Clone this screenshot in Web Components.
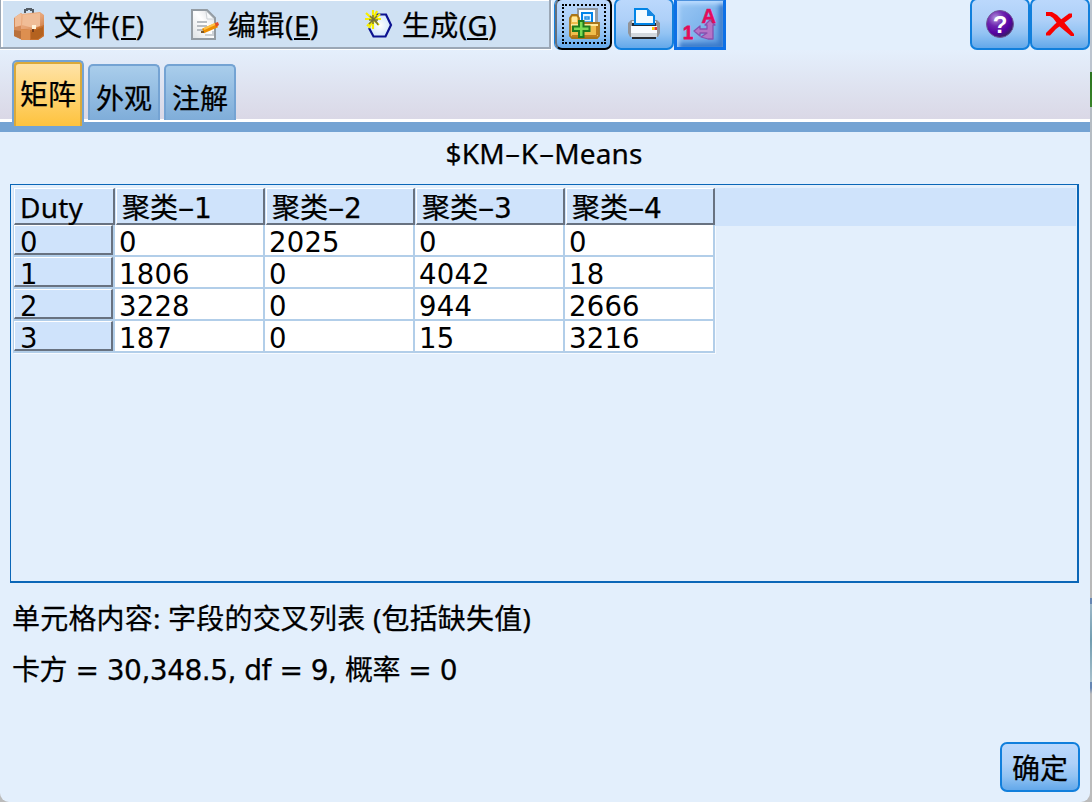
<!DOCTYPE html>
<html lang="zh-CN">
<head>
<meta charset="utf-8">
<title>$KM-K-Means</title>
<style>
html,body{margin:0;height:100%;overflow:hidden;background:#b9bfc6}
body{font:28px/32px "Noto Sans","Noto Sans CJK SC",sans-serif;color:#000;-webkit-text-stroke:.25px #000}
</style>
</head>
<body>
<matrix-window></matrix-window>
<script>
const define = (name, css, html, ready) => customElements.define(name, class extends HTMLElement {
  constructor() {
    super();
    this.attachShadow({mode: 'open'}).innerHTML = `<style>${css}</style>${html}`;
  }
  connectedCallback() { if (ready) ready.call(this, this.shadowRoot); }
});

// Wide hyphen as in the interface face.
define('wide-dash', ':host{display:inline-block;width:16px;text-align:center;letter-spacing:0}span{display:inline-block;transform:scale(1.8,.9)}', '<span><slot></slot></span>');

// Text run tracked so that it fills a given measure.
define('ui-text', ':host{display:inline-block;white-space:pre;flex:none}span{display:inline-block}', '<span><slot></slot></span>', function (root) {
  const w = +this.getAttribute('w');
  if (!w) return;
  const dashes = this.querySelectorAll('wide-dash');
  dashes.forEach(d => customElements.upgrade(d));
  const span = root.querySelector('span');
  const n = [...this.textContent].length - dashes.length;
  span.style.letterSpacing = ((w - span.getBoundingClientRect().width) / n) + 'px';
  this.style.width = w + 'px';
});

define('menu-item',
  ':host{display:flex;align-items:center;gap:8px;height:44px}::slotted(svg){display:block;flex:none}',
  '<slot name="icon"></slot><slot></slot>');

define('menu-bar', `
:host{display:flex;box-sizing:border-box;width:551px;height:49px;padding:3px 0 0 11px;background:#cfe1f3;
 border:solid #9ba7b5;border-width:0 2px 2px 1px;box-shadow:inset 2px 1px #fff,1px 1px #fff,0 2px #fff}
`, '<slot></slot>');

define('tool-button', `
:host{display:block;position:relative;box-sizing:border-box;flex:none;width:60px;height:52px;margin-top:-2px}
.b{box-sizing:border-box;width:100%;height:100%;display:flex;align-items:center;justify-content:center;border:2px solid #117fdc;border-radius:7px;
 background:linear-gradient(#bbd8fc,#aed0f8 42%,#92c3f3 70%,#63a8ea)}
:host([kind=focus]) .b{border-color:#000;border-left-color:#65707c;box-shadow:-1px 0 #1482df}
:host([kind=focus]) .b::after{content:"";position:absolute;left:7px;right:6px;top:6px;bottom:6px;border:2px dotted #000}
:host([kind=flat]) .b{border:3px solid #0d70e6;border-top-color:#4d91dc;border-radius:0;background:linear-gradient(135deg,#9bc8f5,#7fb5ec 55%,#5896de);box-shadow:inset 2px 3px 4px #bcdcff,inset -4px -4px 5px #3979c9}
::slotted(svg){display:block}
`, '<div class="b"><slot></slot></div>');

define('tab-item', `
:host{display:flex;align-items:center;justify-content:center;box-sizing:border-box;width:72px;height:56px;padding-top:10px;
 border:2px solid #74a3d3;border-bottom:0;border-radius:5px 5px 0 0;background:linear-gradient(#a9cdeb,#7fadd9)}
:host([active]){height:66px;padding-top:0;margin-bottom:-6px;background:linear-gradient(#ffe4aa,#fec33e);box-shadow:inset 2px 2px #daa93a,inset -2px 0 #daa93a;position:relative}
`, '<slot></slot>');

define('tab-strip', `
:host{display:flex;align-items:flex-end;gap:4px;box-sizing:border-box;height:69px;padding:0 12px;background:linear-gradient(#e4effc,#dad8e6)}
slot{display:contents}
.w{display:flex;align-items:flex-end;gap:4px;margin-bottom:-1px;position:relative}
`, '<div class="w"><slot></slot></div>');

define('data-table', `
:host{display:block;box-sizing:border-box;height:399px;border:1px solid #0a66b7;border-width:1px 2px 2px 1px;padding:3px 1px 0 2px}
.head{display:flex;height:38px;background:#cfe3fb}
.h{box-sizing:border-box;height:37px;border:solid #fff;border-width:1px 2px 2px 1px;border-right-color:#687280;border-bottom-color:#687280;padding:4px 0 0 5px;margin-left:1px;width:149px;font-family:"DejaVu Sans","Noto Sans CJK SC",sans-serif}
.h:first-child{width:101px;padding-top:2px;font-family:"Noto Sans",sans-serif}
.body{width:702px;box-shadow:1px 1px #f6faff;font:27.5px/32px "DejaVu Sans",sans-serif;-webkit-text-stroke:0}
.r{display:flex;height:32px}
.r:first-child{margin-top:-1px}
.k{box-sizing:border-box;width:99px;height:30px;margin-left:1px;background:#cfe3fb;border:solid #fff;border-width:1px 2px 2px 1px;border-right-color:#687280;border-bottom-color:#687280;padding-left:5px}
.keys{width:102px;background:#b2cee9}
.c{box-sizing:border-box;width:150px;height:32px;background:#fff;border:solid #b2cee9;border-width:0 2px 2px 0;padding:1px 0 0 4px}
ui-text{display:block;line-height:32px}
`, '<div class="head"></div><div class="body"></div>', function (root) {
  const label = s => s.replace('-', '<wide-dash>-</wide-dash>');
  const heads = ['Duty', '聚类-1', '聚类-2', '聚类-3', '聚类-4'];
  root.querySelector('.head').innerHTML = heads.map((t, i) =>
    `<div class="h"><ui-text w="${i ? 90 : 63}">${label(t)}</ui-text></div>`).join('');
  const rows = [[0, 0, 2025, 0, 0], [1, 1806, 0, 4042, 18], [2, 3228, 0, 944, 2666], [3, 187, 0, 15, 3216]];
  root.querySelector('.body').innerHTML = rows.map(r => `<div class="r">${r.map((v, i) => {
    const t = `<ui-text w="${String(v).length * 17.7}">${v}</ui-text>`;
    return i ? `<div class="c">${t}</div>` : `<div class="keys"><div class="k">${t}</div></div>`;
  }).join('')}</div>`).join('');
});

define('matrix-window', `
:host{display:flex;width:1092px;height:802px;background:linear-gradient(#bcc4ce 72px,#2c7420 72px,#3a8429 107px,#b5bcc3 107px,#b8b8b8 598px,#6686b3 598px,#6686b3 604px,#9db8c8 604px,#719db0 640px,#a7c0cc 682px,#6686b3 682px,#6686b3 688px,#bbb 694px)}
.win{display:flex;flex-direction:column;width:1090px;height:802px;background:#e3effc;border-radius:0 0 9px 9px;overflow:hidden}
.bar{display:flex;align-items:flex-start;height:50px;flex:none}
.bar .sp{flex:1}
.line{height:3px;background:#fff;flex:none}
.band{height:10px;background:#74a3d3;flex:none}
.title{display:flex;justify-content:center;height:52px;box-sizing:border-box;padding:5px 2px 0 0;flex:none}
data-table{margin:0 11px 0 10px;flex:none}
.notes{display:flex;flex-direction:column;gap:21px;padding:19px 12px 0}
.num{font-family:"DejaVu Sans","Noto Sans CJK SC",sans-serif}
.foot{display:flex;justify-content:flex-end;margin-top:auto;padding:0 10px 10px 0}
.foot tool-button{width:80px;height:50px;margin:0}
.foot ui-text{margin-top:1px}
tab-strip,.line,.band{width:1090px}
u{text-decoration:none;box-shadow:inset 0 -2px #000;display:inline-block;height:27px;line-height:25px}
svg text{font-family:"Liberation Sans",sans-serif;font-weight:700;letter-spacing:0;-webkit-text-stroke:0}
`, `
<div class="win">
<div class="bar">
<menu-bar>
 <menu-item style="width:175px">
  <svg slot="icon" width="34" height="36" viewBox="0 0 34 36"><defs><linearGradient id="lea" x1="0" y1="0" x2=".6" y2="1"><stop stop-color="#f0b78d"/><stop offset=".5" stop-color="#e6a376"/><stop offset="1" stop-color="#c57132"/></linearGradient></defs>
  <path d="M13 6V3h2V2h4v1h2v4" fill="none" stroke="#555d65" stroke-width="2"/><path d="M2 11l7-5 3 3v24l-4-1-6-3z" fill="#d58b5a"/><path d="M3 10l6-4 2 3v9l-8 2z" fill="#f0bd98"/><path d="M2 23l7 1v8l-7-3z" fill="#b9713c"/><path d="M9 7L28 5l4 3v21l-6 4H9z" fill="url(#lea)"/><path d="M11 8l17-2v13l-7 2-11-3z" fill="#f0bd97"/><path d="M9 22l10 1 13-5v11l-6 4H9z" fill="#c8702e"/><path d="M9 22l9 1v10H9z" fill="#dd8f50"/><path d="M19 25l12-5v8l-5 4h-7z" fill="#b4621f"/><path d="M20 22h2v3h-2z" fill="#743d1a"/><path d="M20 18h4v4h-4z" fill="#fff2d9"/></svg>
  <ui-text w="91">文件(<u>F</u>)</ui-text>
 </menu-item>
 <menu-item style="width:174px">
  <svg slot="icon" width="34" height="36" viewBox="0 0 34 36"><defs><linearGradient id="pg" x1="1" y1="0" x2="0" y2="1"><stop stop-color="#d5d8dd"/><stop offset=".45" stop-color="#fff"/><stop offset="1" stop-color="#dce0e3"/></linearGradient></defs>
  <path d="M5 3h15l8 8v21H5z" fill="url(#pg)" stroke="#949ca3" stroke-width="2"/><path d="M19 4l1 8 7 0z" fill="#f8fafb" stroke="#cdd2d6"/><path d="M10 15h10M10 19h10M10 23h7" stroke="#b8bdc2" stroke-width="2"/><path d="M18 28h8v-4" fill="none" stroke="#ccd0d4" stroke-width="2"/><path d="M16 24l14-6" stroke="#ed8d00" stroke-width="5"/><path d="M17 22l11-5" stroke="#ffc348" stroke-width="2"/><path d="M28 16l3-1 1 3-3 2z" fill="#e04d28"/><path d="M14 24h3v2h-3z" fill="#7d5928"/></svg>
  <ui-text style="margin-left:-1px" w="91">编辑(<u>E</u>)</ui-text>
 </menu-item>
 <menu-item>
  <svg slot="icon" width="34" height="36" viewBox="0 0 34 36"><defs><radialGradient id="hx"><stop stop-color="#fff"/><stop offset="1" stop-color="#d2e6fb"/></radialGradient></defs>
  <path d="M13 7h12l5 11-5 11.500H12L8 24V14z" fill="url(#hx)"/><path d="M15 7.500h10L30 18l-5.500 11.500H12.500L8 21" fill="none" stroke="#0c1290" stroke-width="2.200"/>
  <path d="M12 3v19M16 4L8 21M5 6l13 12M4 12h16M6 19l13-12" fill="none" stroke="#f6ee00" stroke-width="2.200"/><path d="M12 8v9M9 9l7 7M8 13h9M8 17l8-8M15 14l2 4" fill="none" stroke="#77743a" stroke-width="1.500"/></svg>
  <ui-text style="margin-left:-1px" w="95">生成(<u>G</u>)</ui-text>
 </menu-item>
</menu-bar>
<tool-button kind="focus" style="width:57px;margin-left:4px">
 <svg width="34" height="36" viewBox="0 0 34 36" style="margin-top:2px">
 <path d="M11 2h19v24H11z" fill="#fff" stroke="#90979f" stroke-width="2"/><path d="M15 6h10v12H15z" fill="#e8f6ff" stroke="#0084e9" stroke-width="2"/><path d="M18 10h4v2h-4zM16 15h9" fill="none" stroke="#238fe3" stroke-width="1.500"/><path d="M28 3h3v22h-3z" fill="#969da4"/>
 <path d="M3 11l2-3h5l2 3v5h20v13l-2 2H5l-2-2z" fill="#f0bd4c" stroke="#a8741a" stroke-width="1.800"/><path d="M5 10h5v5H5zM4 17h27v2H4z" fill="#ffe89c"/><path d="M29 19h2v9h-2zM5 28h25v2H5z" fill="#bd7a19"/>
 <path d="M12 14h4.500v5.500h6v4.500h-6v6H12v-6H6v-4.500h6z" fill="#7bdc55" stroke="#1f7a1c" stroke-width="2"/></svg>
</tool-button>
<tool-button style="width:60px;margin-left:2px">
 <svg width="36" height="36" viewBox="0 0 36 36">
 <path d="M2 17l3-3h26l3 3v10l-2 4H4l-2-4z" fill="#929397"/><path d="M6 15h24v6H6z" fill="#e4eaf1"/><path d="M6 17h24v3H6z" fill="#222a35"/><path d="M9 3h12l7 7v8H9z" fill="#f4fbff" stroke="#0084e6" stroke-width="2"/><path d="M21 2v8h8z" fill="#1687e0"/><path d="M5 20h26v8H5z" fill="#fafcff"/><path d="M5 27h26v4H5z" fill="#d3d8dd"/><path d="M6 31h24v2H6z" fill="#292c31"/><path d="M26 21h2.500v3H26z" fill="#ffd100"/><path d="M28.500 21h2.500v3h-2.500z" fill="#e43838"/></svg>
</tool-button>
<tool-button kind="flat" style="width:52px">
 <svg width="36" height="38" viewBox="0 0 36 38" style="margin-top:2px">
 <path d="M12 25l6-5v3h7v-4h-2l5-5 5 5h-2v14h-5l-7-2 6-4h-7v3z" fill="#b574c6" stroke="#8a4fae" stroke-width="1.300" stroke-linejoin="round"/>
 <text x="19.500" y="17" font-size="20" fill="#e30b5b" stroke="#e30b5b" stroke-width=".5">A</text><text x="1" y="33" font-size="18" fill="#e30b5b" stroke="#e30b5b" stroke-width=".8">1</text></svg>
</tool-button>
<span class="sp"></span>
<tool-button>
 <svg width="30" height="30" viewBox="0 0 30 30"><defs><radialGradient id="qm" cx=".34" cy=".28" r=".75"><stop stop-color="#b294db"/><stop offset=".4" stop-color="#6e25b0"/><stop offset=".75" stop-color="#5600a1"/><stop offset="1" stop-color="#36215f"/></radialGradient></defs>
 <circle cx="15" cy="15" r="13.500" fill="url(#qm)" stroke="#705496"/><text x="15" y="23.500" font-size="24" text-anchor="middle" fill="#fff">?</text></svg>
</tool-button>
<tool-button>
 <svg width="30" height="26" viewBox="0 0 30 26" fill="#f90000"><path d="M1 1h6l5 3 6 6 11 13v2h-3L14 15 8 7 5 5H1z"/><path d="M27 2.500V6l-8 6-8 6-6 6.500H1V22l4-4 5-5 8-6 6-4.500z"/></svg>
</tool-button>
</div>
<tab-strip><tab-item active><ui-text w="56">矩阵</ui-text></tab-item><tab-item><ui-text w="56">外观</ui-text></tab-item><tab-item><ui-text w="56">注解</ui-text></tab-item></tab-strip>
<div class="line"></div><div class="band"></div>
<div class="title"><ui-text w="197">$KM<wide-dash>-</wide-dash>K<wide-dash>-</wide-dash>Means</ui-text></div>
<data-table></data-table>
<div class="notes"><ui-text w="519">单元格内容: 字段的交叉列表 (包括缺失值)</ui-text><ui-text class="num" w="445">卡方 = 30,348.5, df = 9, 概率 = 0</ui-text></div>
<div class="foot"><tool-button><ui-text w="56">确定</ui-text></tool-button></div>
</div>`);
</script>
</body>
</html>
